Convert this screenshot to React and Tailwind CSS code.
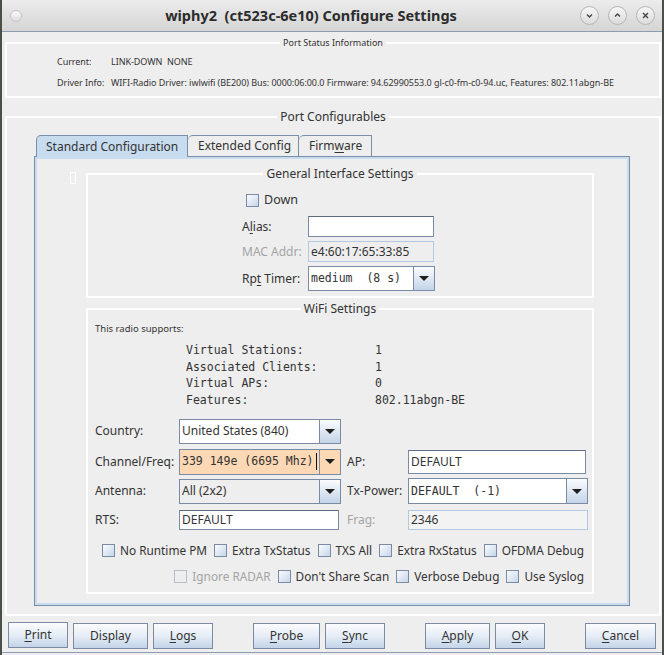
import React from "react";

const Group = ({ title, className, legendClass, children }) => (
  <fieldset className={"border-2 border-white min-w-0 " + className}>
    <legend className={"mx-auto px-[3px] " + legendClass}>{title}</legend>
    {children}
  </fieldset>
);

const Arrow = ({ bg }) => (
  <div
    className={
      "w-[21px] shrink-0 flex items-center justify-center border-l border-[#7a8ba3] " +
      (bg || "bg-gradient-to-b from-[#fbfcfe] to-[#c3d4e8]")
    }
  >
    <div className="w-0 h-0 border-x-[5px] border-x-transparent border-t-[5px] border-t-[#1e1e1e]" />
  </div>
);

const Combo = ({ value, className, boxClass, textClass, arrowBg, caret }) => (
  <div className={"flex shrink-0 border border-[#7a8ba3] " + className}>
    <div className={"flex-1 flex items-center pl-[2px] overflow-hidden whitespace-pre " + boxClass + " " + textClass}>
      {value}
      {caret && <span className="inline-block w-px h-[17px] bg-[#111] ml-[2px]" />}
    </div>
    <Arrow bg={arrowBg} />
  </div>
);

const Field = ({ value, className }) => (
  <div className={"flex shrink-0 items-center pl-[2px] border border-[#7a8ba3] border-t-[#5c6c82] bg-white " + className}>
    {value}
  </div>
);

const Check = ({ label, disabled }) => (
  <div className="flex items-center gap-[5px] whitespace-nowrap shrink-0">
    <div
      className={
        "w-[13px] h-[13px] shrink-0 border " +
        (disabled
          ? "border-[#b9bec6] bg-[#eeeeee]"
          : "border-[#7a8ba3] bg-gradient-to-br from-[#fbfcfe] to-[#c6d6ea]")
      }
    />
    <span className={disabled ? "text-[#a4a4a4]" : ""}>{label}</span>
  </div>
);

const Btn = ({ children, w }) => (
  <button
    className={
      "h-[26px] border border-[#7a8ba3] bg-gradient-to-b from-[#fbfcfe] via-[#e5edf6] to-[#c3d4e8] text-[12px] text-[#333] " +
      w
    }
  >
    {children}
  </button>
);

const U = ({ children }) => <span className="underline underline-offset-2">{children}</span>;

const TitleBtn = ({ children }) => (
  <div className="w-[19px] h-[19px] rounded-full border border-[#b5b5b5] bg-gradient-to-b from-[#f7f7f7] to-[#dcdcdc] flex items-center justify-center text-[#444]">
    {children}
  </div>
);

export default function App() {
  return (
    <div className="w-[664px] h-[655px] bg-[#eeeeee] border-x-2 border-[#4a4f4a] flex flex-col text-[#333] font-['Noto_Sans',sans-serif] overflow-hidden">
      {/* title bar */}
      <div className="h-[32px] shrink-0 flex items-center border-b border-[#8c9cb3] bg-gradient-to-b from-[#ececec] to-[#d5d5d5]">
        <div className="ml-[8px] w-[12px] h-[12px] rounded-full border border-[#c4c4c4] bg-gradient-to-b from-[#fafafa] to-[#dedede]" />
        <div className="flex-1 text-center font-bold text-[14.5px] text-[#2c2c2c] whitespace-pre pl-[20px]">
          wiphy2  (ct523c-6e10) Configure Settings
        </div>
        <div className="flex gap-[9px] mr-[7px]">
          <TitleBtn>
            <svg width="9" height="9" viewBox="0 0 9 9"><path d="M2 3.5 L4.5 6 L7 3.5" fill="none" stroke="#444" strokeWidth="1.4" /></svg>
          </TitleBtn>
          <TitleBtn>
            <svg width="9" height="9" viewBox="0 0 9 9"><path d="M2 5.5 L4.5 3 L7 5.5" fill="none" stroke="#444" strokeWidth="1.4" /></svg>
          </TitleBtn>
          <TitleBtn>
            <svg width="9" height="9" viewBox="0 0 9 9"><path d="M2 2 L7 7 M7 2 L2 7" fill="none" stroke="#444" strokeWidth="1.4" /></svg>
          </TitleBtn>
        </div>
      </div>

      {/* port status */}
      <Group
        title="Port Status Information"
        className="ml-[3px] mr-[1px] mt-[5px] h-[61px] shrink-0"
        legendClass="text-[9px] leading-[12px]"
      >
        <div className="pl-[50px] pt-[6px] text-[9px] leading-[14px] flex flex-col gap-[7px] whitespace-nowrap tracking-[-0.05px]">
          <div className="flex">
            <span className="w-[54px]">Current:</span>
            <span>LINK-DOWN&nbsp;&nbsp;NONE</span>
          </div>
          <div className="flex">
            <span className="w-[54px]">Driver Info:</span>
            <span>
              WIFI-Radio Driver: iwlwifi (BE200) Bus: 0000:06:00.0 Firmware: 94.62990553.0 gl-c0-fm-c0-94.uc, Features: 802.11abgn-BE
            </span>
          </div>
        </div>
      </Group>

      {/* port configurables */}
      <Group
        title="Port Configurables"
        className="ml-[3px] mr-[1px] mt-[11px] h-[507px] shrink-0"
        legendClass="text-[12px] leading-[16px]"
      >
        <div className="ml-[27px] mt-[10px]">
          <div className="flex items-end h-[21px] ml-[2px] text-[12px]">
            <div className="h-[22px] -mb-px w-[152px] flex items-center pl-[9px] bg-[#c8dcf0] border border-b-0 border-[#7b8fa9] rounded-tl-[5px] relative z-10">
              Standard Configuration
            </div>
            <div className="h-[21px] w-[111px] flex items-center pl-[10px] border border-l-0 border-b-0 border-[#7b8fa9] rounded-tl-[5px]">
              Extended Config
            </div>
            <div className="h-[21px] w-[73px] flex items-center pl-[10px] border border-l-0 border-b-0 border-[#7b8fa9] rounded-tl-[5px]">
              Firm<U>w</U>are
            </div>
          </div>

          <div className="w-[596px] h-[450px] border border-[#7b8fa9]">
            <div className="h-full border-2 border-[#c8dcf0] flex items-start">
              <div className="ml-[33px] mt-[13px] w-[6px] h-[12px] border border-white" />
              <div className="ml-[10px] w-[508px] flex flex-col">
                {/* General */}
                <Group
                  title="General Interface Settings"
                  className="mt-[7px] h-[132px]"
                  legendClass="text-[12px] leading-[16px]"
                >
                  <div className="pl-[154px] text-[12px] flex flex-col">
                    <div className="mt-[9px] h-[16px] ml-[4px] text-[12.5px]">
                      <Check label="Down" />
                    </div>
                    <div className="mt-[9px] flex items-center h-[21px]">
                      <span className="w-[66px]">A<U>l</U>ias:</span>
                      <Field value="" className="w-[126px] h-[21px]" />
                    </div>
                    <div className="mt-[4px] flex items-center h-[21px]">
                      <span className="w-[66px] text-[#a4a4a4]">MAC Addr:</span>
                      <div className="w-[126px] h-[21px] flex items-center pl-[2px] border border-[#b3c9e0] bg-[#eeeeee]">
                        e4:60:17:65:33:85
                      </div>
                    </div>
                    <div className="mt-[4px] flex items-center h-[25px]">
                      <span className="w-[66px]">Rp<U>t</U> Timer:</span>
                      <Combo
                        value="medium  (8 s)"
                        className="w-[127px] h-[25px]"
                        boxClass="bg-white"
                        textClass="font-['DejaVu_Sans_Mono',monospace] text-[11.5px]"
                      />
                    </div>
                  </div>
                </Group>

                {/* WiFi */}
                <Group
                  title="WiFi Settings"
                  className="mt-[3px] h-[293px]"
                  legendClass="text-[12px] leading-[16px]"
                >
                  <div className="pl-[7px] flex flex-col">
                    <div className="mt-[5px] text-[9.5px] leading-[13px]">This radio supports:</div>
                    <div className="mt-[7px] ml-[91px] font-['DejaVu_Sans_Mono',monospace] text-[11.5px] leading-[16.7px] whitespace-pre">
                      {[
                        ["Virtual Stations:", "1"],
                        ["Associated Clients:", "1"],
                        ["Virtual APs:", "0"],
                        ["Features:", "802.11abgn-BE"],
                      ].map(([k, v]) => (
                        <div key={k} className="flex">
                          <span className="w-[189px]">{k}</span>
                          <span>{v}</span>
                        </div>
                      ))}
                    </div>

                    <div className="mt-[10px] text-[12px] flex flex-col">
                      <div className="flex items-center h-[25px]">
                        <span className="w-[84px] shrink-0">Country:</span>
                        <Combo value="United States (840)" className="w-[162px] h-[25px]" boxClass="bg-white" textClass="" />
                      </div>
                      <div className="mt-[5px] flex items-center h-[26px]">
                        <span className="w-[84px] shrink-0">Channel/Freq:</span>
                        <Combo
                          value="339 149e (6695 Mhz)"
                          className="w-[162px] h-[26px]"
                          boxClass="bg-[#fdd8b5]"
                          textClass="font-['DejaVu_Sans_Mono',monospace] text-[11.5px]"
                          arrowBg="bg-[#fdd8b5]"
                          caret
                        />
                        <span className="ml-[6px] w-[61px] shrink-0">AP:</span>
                        <Field value="DEFAULT" className="w-[178px] h-[24px]" />
                      </div>
                      <div className="mt-[4px] flex items-center h-[25px]">
                        <span className="w-[84px] shrink-0">Antenna:</span>
                        <Combo value="All (2x2)" className="w-[162px] h-[25px]" boxClass="bg-[#eeeeee]" textClass="" />
                        <span className="ml-[6px] w-[61px] shrink-0">Tx-Power:</span>
                        <Combo
                          value="DEFAULT  (-1)"
                          className="w-[180px] h-[26px]"
                          boxClass="bg-white"
                          textClass="font-['DejaVu_Sans_Mono',monospace] text-[11.5px]"
                        />
                      </div>
                      <div className="mt-[6px] flex items-center h-[20px]">
                        <span className="w-[84px] shrink-0">RTS:</span>
                        <Field value="DEFAULT" className="w-[160px] h-[20px]" />
                        <span className="ml-[8px] w-[61px] shrink-0 text-[#a4a4a4]">Frag:</span>
                        <div className="w-[180px] shrink-0 h-[20px] flex items-center pl-[2px] border border-[#b3c9e0] bg-[#f3f3f3]">
                          2346
                        </div>
                      </div>
                    </div>

                    <div className="mt-[13px] pr-[8px] text-[11.8px] flex flex-col items-end gap-[10px]">
                      <div className="flex gap-[7px] h-[16px] items-center">
                        <Check label="No Runtime PM" />
                        <Check label="Extra TxStatus" />
                        <Check label="TXS All" />
                        <Check label="Extra RxStatus" />
                        <Check label="OFDMA Debug" />
                      </div>
                      <div className="flex gap-[7px] h-[16px] items-center">
                        <Check label="Ignore RADAR" disabled />
                        <Check label="Don't Share Scan" />
                        <Check label="Verbose Debug" />
                        <Check label="Use Syslog" />
                      </div>
                    </div>
                  </div>
                </Group>
              </div>
            </div>
          </div>
        </div>
      </Group>

      {/* buttons */}
      <div className="mt-[6px] ml-[6px] flex">
        <Btn w="w-[60px]"><U>P</U>rint</Btn>
        <div className="ml-[5px]"><Btn w="w-[75px]">Display</Btn></div>
        <div className="ml-[5px]"><Btn w="w-[60px]"><U>L</U>ogs</Btn></div>
        <div className="ml-[40px]"><Btn w="w-[67px]"><U>P</U>robe</Btn></div>
        <div className="ml-[5px]"><Btn w="w-[60px]"><U>S</U>ync</Btn></div>
        <div className="ml-[40px]"><Btn w="w-[65px]"><U>A</U>pply</Btn></div>
        <div className="ml-[5px]"><Btn w="w-[50px]"><U>O</U>K</Btn></div>
        <div className="ml-[40px]"><Btn w="w-[71px]"><U>C</U>ancel</Btn></div>
      </div>
      <div className="flex-1" />
      <div className="h-[3px] border-t border-[#8c9cb3]" />
    </div>
  );
}
